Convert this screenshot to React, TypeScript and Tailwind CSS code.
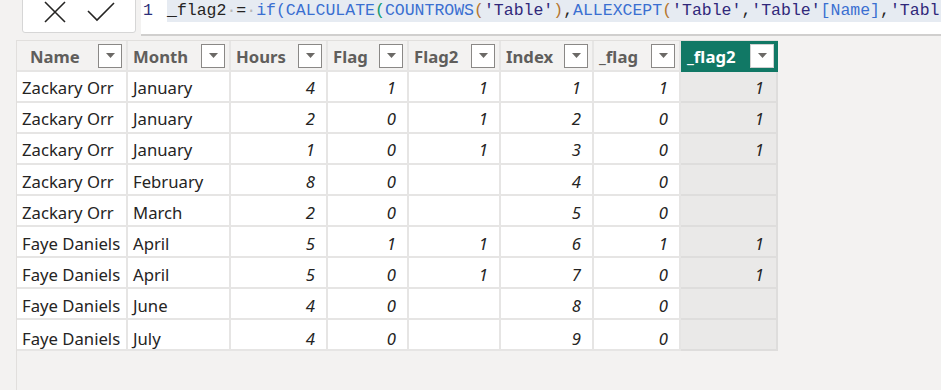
import React from "react";

type Row = [string, string, string, string, string, string, string, string];

const rows: Row[] = [
  ["Zackary Orr", "January", "4", "1", "1", "1", "1", "1"],
  ["Zackary Orr", "January", "2", "0", "1", "2", "0", "1"],
  ["Zackary Orr", "January", "1", "0", "1", "3", "0", "1"],
  ["Zackary Orr", "February", "8", "0", "", "4", "0", ""],
  ["Zackary Orr", "March", "2", "0", "", "5", "0", ""],
  ["Faye Daniels", "April", "5", "1", "1", "6", "1", "1"],
  ["Faye Daniels", "April", "5", "0", "1", "7", "0", "1"],
  ["Faye Daniels", "June", "4", "0", "", "8", "0", ""],
  ["Faye Daniels", "July", "4", "0", "", "9", "0", ""],
];

const headers = ["Name", "Month", "Hours", "Flag", "Flag2", "Index", "_flag", "_flag2"];

function Dropdown({ active }: { active?: boolean }) {
  return (
    <div
      className={`w-6 h-6 bg-white border flex items-center justify-center shrink-0 ${
        active ? "border-[#d0d0d0]" : "border-[#8a8886]"
      }`}
    >
      <svg width="9" height="5" viewBox="0 0 9 5">
        <path d="M0 0 L9 0 L4.5 5 Z" fill="#6b6966" />
      </svg>
    </div>
  );
}

function Dot() {
  return <span className="text-[#b8b8b8]">·</span>;
}

export default function App() {
  return (
    <div
      className="w-[941px] h-[390px] bg-[#f3f2f1] overflow-hidden flex flex-col"
      style={{ fontFamily: '"Noto Sans", "Open Sans", sans-serif' }}
    >
      {/* Formula bar */}
      <div className="flex h-[36px] shrink-0">
        <div className="ml-[22px] w-[114px] h-[34px] -mt-px bg-white border border-[#d6d6d6] rounded-b-[3px] flex items-center justify-center gap-[20px] pb-[8px]">
          <svg width="24" height="22" viewBox="0 0 24 22">
            <path d="M2 1 L22 21 M22 1 L2 21" stroke="#252423" strokeWidth="1.6" fill="none" />
          </svg>
          <svg width="28" height="20" viewBox="0 0 28 20">
            <path d="M1 9 L10 18 L27 1" stroke="#252423" strokeWidth="1.6" fill="none" />
          </svg>
        </div>
        <div className="ml-[5px] flex-1 h-[36px] bg-white border-b-2 border-[#d0cfce] overflow-hidden">
          <div
            className="flex h-[22px] items-center whitespace-pre text-[16.5px] leading-[22px]"
            style={{ fontFamily: '"Liberation Mono", monospace' }}
          >
            <span className="w-[26px] pl-[2px] text-[#2d2f7a] shrink-0">1</span>
            <span className="bg-[#e6ebf2] pr-4 text-[#252423]">
              _flag2<Dot />=<Dot />
              <span className="text-[#3a6fd1]">if(</span>
              <span className="text-[#3a6fd1]">CALCULATE</span>
              <span className="text-[#0e9a6e]">(</span>
              <span className="text-[#3a6fd1]">COUNTROWS</span>
              <span className="text-[#b5762f]">(</span>
              <span className="text-[#30287a]">'Table'</span>
              <span className="text-[#b5762f]">)</span>
              <span className="text-[#252423]">,</span>
              <span className="text-[#3a6fd1]">ALLEXCEPT</span>
              <span className="text-[#b5762f]">(</span>
              <span className="text-[#30287a]">'Table'</span>,
              <span className="text-[#30287a]">'Table'</span>
              <span className="text-[#3a6fd1]">[Name]</span>,
              <span className="text-[#30287a]">'Tabl</span>
            </span>
          </div>
        </div>
      </div>

      {/* Grid area */}
      <div className="flex flex-1">
        <div className="w-[17px] border-r border-[#e1dfdd] mt-[4px]" />
        <div className="mt-[4px]">
          <div className="grid grid-cols-[111px_103px_97px_81px_92px_93px_87px_97px] border-t border-[#e1dfdd]">
            {headers.map((h, i) => {
              const active = i === headers.length - 1;
              return (
                <div
                  key={h}
                  className={`h-[31px] flex items-center justify-between pr-[4px] border-b-2 ${
                    active
                      ? "bg-[#117865] text-white pl-[6px] border-[#117865]"
                      : `bg-[#f3f2f1] text-[#605e5c] border-r-2 border-[#e6e5e4] ${
                          i === 0 ? "pl-[13px]" : "pl-[5px]"
                        }`
                  } text-[16.7px] font-bold`}
                >
                  <span className="leading-none mt-[3px]">{h}</span>
                  <Dropdown active={active} />
                </div>
              );
            })}
            {rows.map((r, ri) =>
              r.map((v, ci) => {
                const last = ci === r.length - 1;
                const text = ci < 2;
                const lastRow = ri === rows.length - 1;
                return (
                  <div
                    key={`${ri}-${ci}`}
                    className={`h-[31px] flex items-center border-b-2 text-[16.7px] text-[#252423] ${
                      lastRow ? "pt-[9px]" : ri < 3 ? "pt-[2px]" : "pt-[4px]"
                    } ${
                      last
                        ? "bg-[#eae9e8] border-r-2 border-[#dedddc] justify-end pr-[12px] italic"
                        : text
                        ? "bg-white border-r-2 border-[#e6e5e4] pl-[5px]"
                        : "bg-white border-r-2 border-[#e6e5e4] justify-end pr-[11px] italic"
                    }`}
                  >
                    {v}
                  </div>
                );
              })
            )}
          </div>
        </div>
      </div>
    </div>
  );
}
